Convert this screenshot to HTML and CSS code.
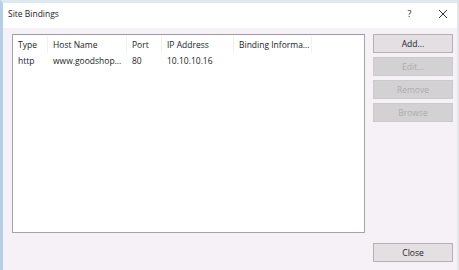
FILE: index.html
```html
<!DOCTYPE html>
<html lang="en">
  <head>
    <meta charset="UTF-8" />
    <title>Site Bindings</title>
    <link rel="stylesheet" href="styles.css">
  </head>
  <body>
    <div class="dialog">
      <div class="title-bar">
        <span class="title">Site Bindings</span>
        <span class="title-btn">?</span>
        <span class="title-btn close-x">
          <svg width="10" height="10" viewBox="0 0 10 10" fill="none" stroke="#333" stroke-width="1">
            <path d="M1 1L9 9M9 1L1 9" />
          </svg>
        </span>
      </div>

      <div class="dialog-body">
        <div class="main-row">
          <div class="list">
            <div class="list-row list-head">
              <span class="col c-type">Type</span>
              <span class="col c-host">Host Name</span>
              <span class="col c-port">Port</span>
              <span class="col c-ip">IP Address</span>
              <span class="col c-info">Binding Informa...</span>
            </div>
            <div class="list-row">
              <span class="col c-type">http</span>
              <span class="col c-host">www.goodshop...</span>
              <span class="col c-port">80</span>
              <span class="col c-ip">10.10.10.16</span>
              <span class="col c-info"></span>
            </div>
          </div>

          <div class="actions">
            <button class="btn">Add...</button>
            <button class="btn" disabled>Edit...</button>
            <button class="btn" disabled>Remove</button>
            <button class="btn" disabled>Browse</button>
          </div>
        </div>

        <div class="footer">
          <button class="btn">Close</button>
        </div>
      </div>
    </div>
  </body>
</html>
```

FILE: styles.css
```css
:root {
  --face: #f6f1f6;
  --text: #1c1c1c;
  --edge: #b8cfe3;
}

html,
body {
  margin: 0;
  padding: 0;
  width: 459px;
  height: 270px;
  overflow: hidden;
  font-family: "Open Sans", "Noto Sans", sans-serif;
  font-size: 8.5px;
  color: var(--text);
  background: #e9eef3;
}

.dialog {
  box-sizing: border-box;
  width: 459px;
  height: 270px;
  display: flex;
  flex-direction: column;
  border-top: 3px solid #dfe8ef;
  border-left: 3px solid var(--edge);
  border-right: 2px solid #e4e4e8;
  background: var(--face);
}

.title-bar {
  height: 25px;
  display: flex;
  align-items: center;
  background: #ffffff;
  padding-left: 5px;
}

.title {
  flex: 1;
  font-size: 8.5px;
  margin-top: -5px;
}

.title-btn {
  width: 33px;
  text-align: center;
  font-size: 9px;
  margin-top: -4px;
}

.close-x {
  display: flex;
  justify-content: center;
  align-items: center;
  margin-right: -2px;
}

.dialog-body {
  flex: 1;
  display: flex;
  flex-direction: column;
  padding: 6px 4px 0 9px;
}

.main-row {
  display: flex;
  gap: 8px;
}

.list {
  box-sizing: border-box;
  width: 355px;
  height: 199px;
  background: #ffffff;
  border: 1px solid #a5a5a5;
  border-top-color: #9c9c9c;
  padding-top: 1px;
}

.list-row {
  display: flex;
  height: 15px;
  align-items: center;
}

.list-head {
  height: 17px;
}

.col {
  box-sizing: border-box;
  padding-left: 5px;
  white-space: nowrap;
  overflow: hidden;
}

.list-head .col {
  border-right: 1px solid #f1f1f1;
  height: 100%;
  display: flex;
  align-items: center;
}

.c-type { width: 35px; }
.c-host { width: 79px; }
.c-port { width: 35px; }
.c-ip { width: 72px; }
.c-info { width: 78px; }

.actions {
  display: flex;
  flex-direction: column;
  gap: 4px;
}

.btn {
  box-sizing: border-box;
  width: 80px;
  height: 19px;
  margin: 0;
  padding: 0;
  font-family: inherit;
  font-size: 8.5px;
  color: var(--text);
  background: #e3dfe3;
  border: 1px solid #b4b0b4;
}

.btn:disabled {
  color: #aeabae;
  background: #d4d1d4;
  border-color: #ccc8cc;
}

.footer {
  display: flex;
  justify-content: flex-end;
  padding: 10px 0 0;
}
```
